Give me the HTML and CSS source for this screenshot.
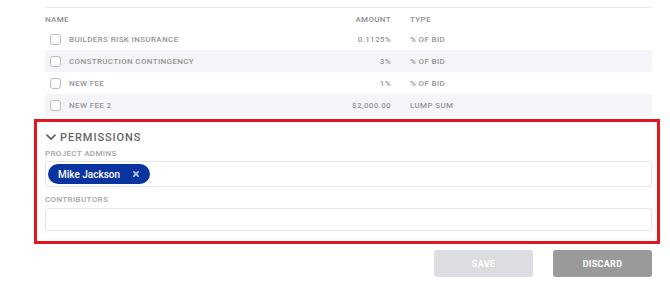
FILE: index.html
```html
<!DOCTYPE html>
<html lang="en">
<head>
  <meta charset="UTF-8">
  <title>Bid fees and permissions</title>
  <link rel="stylesheet" href="styles.css">
</head>
<body>
  <div class="page">
    <!-- fees table -->
    <div class="fees">
      <div class="fee-row fee-head">
        <span class="col-name">Name</span>
        <span class="col-amount">Amount</span>
        <span class="col-type">Type</span>
      </div>
      <div class="fee-row">
        <span class="col-name"><span class="check"></span>Builders Risk Insurance</span>
        <span class="col-amount">0.1125%</span>
        <span class="col-type">% of bid</span>
      </div>
      <div class="fee-row alt">
        <span class="col-name"><span class="check"></span>Construction Contingency</span>
        <span class="col-amount">3%</span>
        <span class="col-type">% of bid</span>
      </div>
      <div class="fee-row">
        <span class="col-name"><span class="check"></span>New Fee</span>
        <span class="col-amount">1%</span>
        <span class="col-type">% of bid</span>
      </div>
      <div class="fee-row alt">
        <span class="col-name"><span class="check"></span>New Fee 2</span>
        <span class="col-amount">$2,000.00</span>
        <span class="col-type">Lump sum</span>
      </div>
    </div>

    <!-- permissions -->
    <div class="permissions">
      <div class="perm-title">
        <svg class="chevron" width="10" height="7" viewBox="0 0 10 7" fill="none">
          <path d="M1 1.2l4 4 4-4" stroke="#666" stroke-width="1.8" stroke-linecap="round" stroke-linejoin="round"/>
        </svg>
        Permissions
      </div>
      <div class="field-label">Project Admins</div>
      <div class="field-box tall">
        <span class="chip">Mike Jackson
          <svg class="chip-x" width="6" height="6" viewBox="0 0 6 6" fill="none">
            <path d="M0.6 0.6l4.8 4.8M5.4 0.6l-4.8 4.8" stroke="#c3cbe2" stroke-width="1.5" stroke-linecap="round"/>
          </svg>
        </span>
      </div>
      <div class="field-label">Contributors</div>
      <div class="field-box"></div>
    </div>

    <div class="actions">
      <button class="btn btn-save">Save</button>
      <button class="btn btn-discard">Discard</button>
    </div>
  </div>
</body>
</html>
```

FILE: styles.css
```css
* {
  box-sizing: border-box;
  margin: 0;
  padding: 0;
}
body {
  font-family: Roboto, "Liberation Sans", Arial, sans-serif;
  background: #fff;
  color: #999;
}
.page {
  padding-top: 7px;
}
/* fees table */
.fees {
  margin-left: 45px;
  width: 607px;
  border-top: 1px solid #e9e9ec;
  padding-top: 2px;
}
.fee-row {
  display: flex;
  align-items: center;
  height: 22px;
  font-size: 8px;
  font-weight: 500;
  letter-spacing: 0.35px;
  text-transform: uppercase;
  color: #959595;
  border-radius: 3px;
}
.fee-row.fee-head {
  height: 18px;
  padding-top: 1px;
  color: #8f8f8f;
}
.fee-row.alt {
  background: #f4f5f8;
}
.col-name {
  display: flex;
  align-items: center;
  width: 285px;
  flex: 0 0 285px;
}
.check {
  width: 11px;
  height: 11px;
  border: 1px solid #bdbdbd;
  border-radius: 3px;
  background: #fff;
  margin: 0 8px 0 5px;
}
.col-amount {
  width: 61px;
  flex: 0 0 61px;
  text-align: right;
  white-space: nowrap;
}
.col-type {
  margin-left: 19px;
}
/* permissions */
.permissions {
  margin: 3px 10px 0 34px;
  border: 3px solid #e3161d;
  padding: 7px 5px 10px 8px;
}
.perm-title {
  display: flex;
  align-items: center;
  font-size: 11px;
  font-weight: 500;
  letter-spacing: 0.9px;
  text-transform: uppercase;
  color: #666;
  height: 16px;
}
.chevron {
  margin: 0 4px 0 1px;
}
.field-label {
  font-size: 8px;
  font-weight: 500;
  letter-spacing: 0.35px;
  text-transform: uppercase;
  color: #a3a3a3;
  margin-top: 2px;
  height: 13px;
  line-height: 13px;
}
.field-box {
  height: 23px;
  border: 1px solid #e3e4e8;
  border-radius: 3px;
  margin-top: 2px;
  display: flex;
  align-items: center;
  padding-left: 2px;
}
.field-box.tall {
  height: 26px;
  margin-top: 1px;
  margin-bottom: 6px;
}
.chip {
  display: inline-flex;
  align-items: center;
  height: 20px;
  padding: 0 11px 0 10px;
  background: #0a35a0;
  color: #fff;
  border-radius: 10px;
  font-size: 10px;
  font-weight: 500;
}
.chip-x {
  margin-left: 13px;
}
/* buttons */
.actions {
  display: flex;
  justify-content: flex-end;
  gap: 20px;
  margin: 6px 18px 0 0;
}
.btn {
  width: 99px;
  height: 27px;
  border: none;
  border-radius: 3px;
  color: #fff;
  font-family: Roboto, "Liberation Sans", Arial, sans-serif;
  font-size: 9px;
  font-weight: 700;
  letter-spacing: 0.3px;
  text-transform: uppercase;
}
.btn-save {
  background: #dcdde0;
}
.btn-discard {
  background: #9a9a9a;
}
```
